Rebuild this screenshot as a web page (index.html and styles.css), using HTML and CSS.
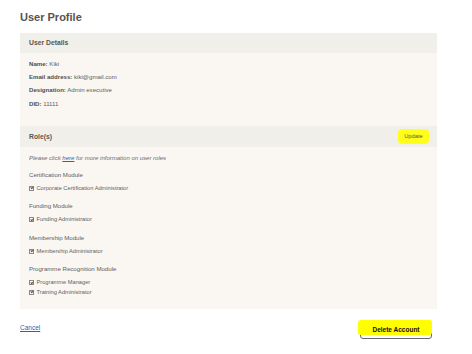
FILE: index.html
```html
<!DOCTYPE html>
<html>
<head>
<meta charset="utf-8">
<link rel="stylesheet" href="styles.css">
</head>
<body>
<div class="page">
  <h1 class="title">User Profile</h1>
  <div class="panel">
    <div class="panel-head">User Details</div>
    <div class="details">
      <div class="row"><b>Name:</b> Kiki</div>
      <div class="row"><b>Email address:</b> kiki@gmail.com</div>
      <div class="row"><b>Designation:</b> Admin executive</div>
      <div class="row"><b>DID:</b> 11111</div>
    </div>
    <div class="panel-head roles-head">
      <span>Role(s)</span>
      <button class="update">Update</button>
    </div>
    <div class="roles">
      <p class="note">Please click <a href="#">here</a> for more information on user roles</p>
      <div class="group">
        <div class="module">Certification Module</div>
        <div class="item"><span class="cb"></span>Corporate Certification Administrator</div>
      </div>
      <div class="group">
        <div class="module">Funding Module</div>
        <div class="item"><span class="cb"></span>Funding Administrator</div>
      </div>
      <div class="group">
        <div class="module">Membership Module</div>
        <div class="item"><span class="cb"></span>Membership Administrator</div>
      </div>
      <div class="group">
        <div class="module">Programme Recognition Module</div>
        <div class="item"><span class="cb"></span>Programme Manager</div>
        <div class="item"><span class="cb"></span>Training Administrator</div>
      </div>
    </div>
  </div>
  <div class="footer">
    <a href="#" class="cancel">Cancel</a>
    <button class="delete"><span>Delete Account</span></button>
  </div>
</div>
</body>
</html>
```

FILE: styles.css
```css
html, body {
  margin: 0;
  padding: 0;
  background: #ffffff;
}
body {
  font-family: "Liberation Sans", Arial, sans-serif;
  color: #555;
}
.page {
  width: 417px;
  padding: 0 35px 0 20px;
}
.title {
  margin: 0;
  height: 33px;
  font-size: 11px;
  line-height: 34px;
  font-weight: bold;
  color: #57534d;
}
.panel {
  background: #faf7f3;
}
.panel-head {
  height: 20px;
  background: #f1efea;
  padding: 0 9px;
  font-size: 6.8px;
  font-weight: bold;
  line-height: 20px;
  color: #5a5651;
}
.details {
  padding: 3.5px 9px 15.5px;
  font-size: 6.1px;
  line-height: 13.4px;
  color: #606060;
}
.details b {
  color: #4e4e4e;
}
.roles-head {
  height: 21px;
  line-height: 21px;
  display: flex;
  justify-content: space-between;
  align-items: center;
  padding-right: 8px;
}
.update {
  font-family: "Liberation Sans", Arial, sans-serif;
  font-size: 5.8px;
  color: #555;
  background: #ffff1a;
  border: none;
  border-radius: 4px;
  width: 31px;
  height: 15px;
  padding: 0;
  line-height: 15px;
}
.roles {
  padding: 6px 9px 11.5px;
  color: #606060;
}
.note {
  margin: 0 0 7px;
  font-size: 6px;
  line-height: 10px;
  font-style: italic;
  color: #6a6a6a;
}
.note a {
  color: #2266bb;
  text-decoration: underline;
}
.group + .group {
  margin-top: 8px;
}
.module {
  font-size: 6.1px;
  line-height: 10px;
  margin-bottom: 4px;
  color: #606060;
}
.item {
  font-size: 5.7px;
  line-height: 9.5px;
  display: flex;
  align-items: center;
  color: #5e5e5e;
}
.cb {
  position: relative;
  display: inline-block;
  width: 3px;
  height: 3px;
  background: #fff;
  border: 0.5px solid #888;
  margin-right: 2.5px;
}
.cb::after {
  content: "";
  position: absolute;
  left: 0.6px;
  top: -0.4px;
  width: 1.2px;
  height: 2.2px;
  border: solid #555;
  border-width: 0 0.8px 0.8px 0;
  transform: rotate(45deg);
}
.footer {
  display: flex;
  justify-content: space-between;
  align-items: center;
  margin-top: 14px;
  padding-right: 5px;
}
.cancel {
  font-size: 6.5px;
  color: #2266bb;
  text-decoration: underline;
  margin-top: -6px;
}
.delete {
  position: relative;
  width: 72px;
  height: 16px;
  padding: 0;
  background: #fff;
  border: 1px solid #666;
  border-radius: 3px;
  font-family: "Liberation Sans", Arial, sans-serif;
  font-size: 6.5px;
  font-weight: bold;
  color: #111;
}
.delete::before {
  content: "";
  position: absolute;
  left: -3px;
  top: -4px;
  width: 74px;
  height: 15px;
  background: #ffff00;
  border-radius: 3px 2px 3px 2px;
}
.delete span {
  position: relative;
  top: -1px;
}
```
